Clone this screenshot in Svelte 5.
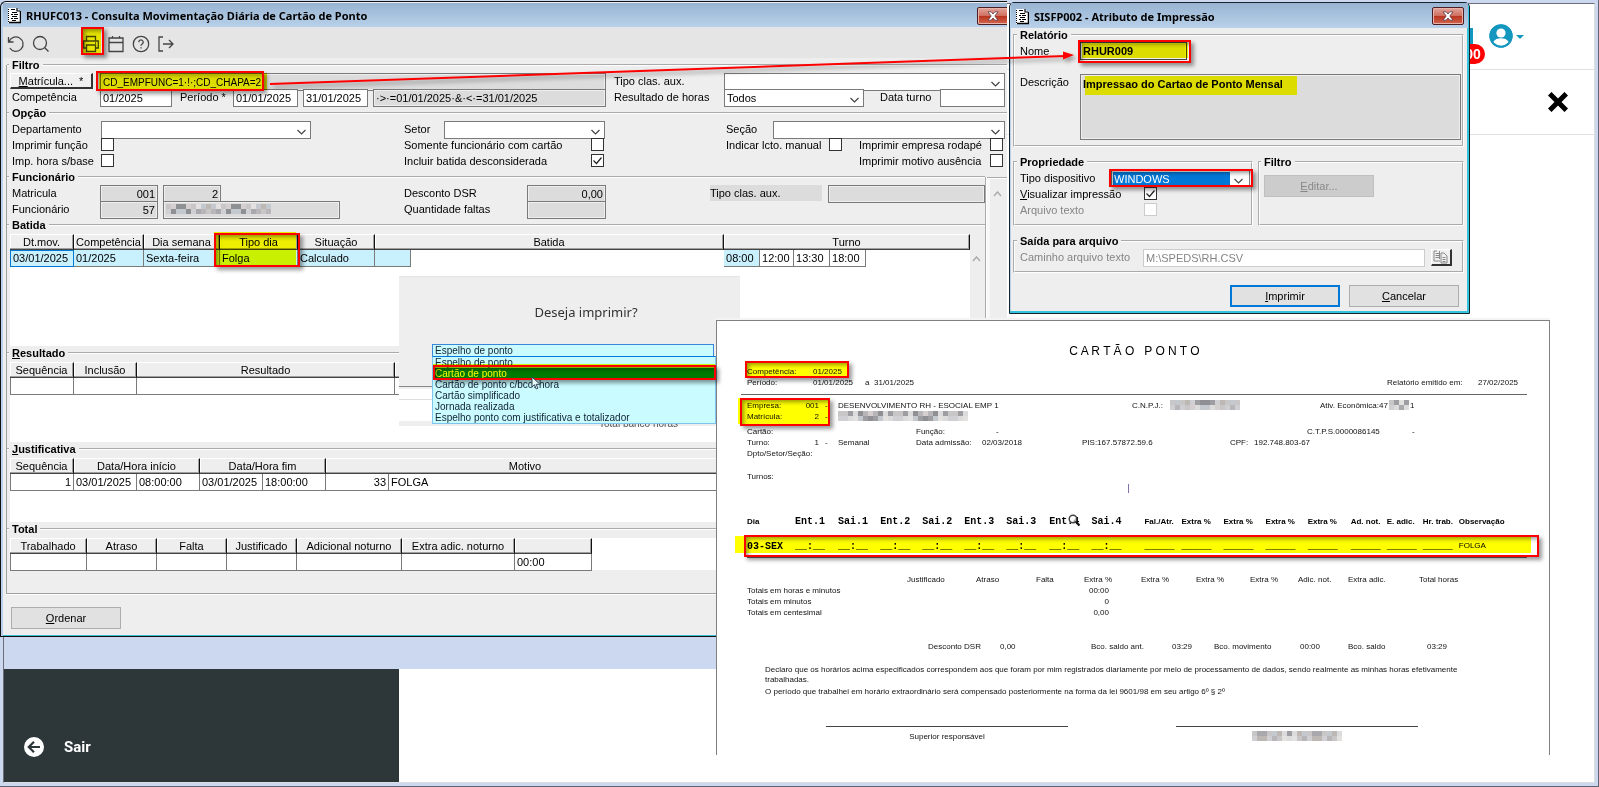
<script>
  const tones = ['#c9c6c8', '#a9a9ad', '#dcdcdc', '#b9b6ba', '#8f9094', '#cfcfd4', '#bdb8b4', '#e4e2e0', '#9d9da2', '#c4c8cf', '#d6cfd0'];
  const punches = ['Ent.1', 'Sai.1', 'Ent.2', 'Sai.2', 'Ent.3', 'Sai.3', 'Ent.4', 'Sai.4'];
  const sums = ['Fal./Atr.', 'Extra %', 'Extra %', 'Extra %', 'Extra %', 'Ad. not.', 'E. adic.', 'Hr. trab.'];
  const reports = ['Espelho de ponto', 'Cartão de ponto', 'Cartão de ponto c/bco. hora', 'Cartão simplificado', 'Jornada realizada', 'Espelho ponto com justificativa e totalizador'];
  const totals = ['Justificado', 'Atraso', 'Falta', 'Extra %', 'Extra %', 'Extra %', 'Extra %', 'Adic. not.', 'Extra adic.', 'Total horas'];
</script>

{#snippet mosaic(cols, rows, size, seed)}
  <svg class="mosaic" width={cols * size} height={rows * size} aria-hidden="true">
    {#each Array(rows) as _, r}
      {#each Array(cols) as _, c}
        <rect x={c * size} y={r * size} width={size} height={size} fill={tones[(c * 7 + r * 5 + c * c * seed) % tones.length]} />
      {/each}
    {/each}
  </svg>
{/snippet}

{#snippet docIcon()}
  <svg class="doc" width="14" height="17" viewBox="0 0 14 17" aria-hidden="true">
    <path d="M1 1h9l3 3v12H1z" fill="#fff" />
    <path d="M2 15.500h11.500V4" fill="none" stroke="#000" stroke-width="1.500" />
    <path d="M1.500 2v13" stroke="#000" stroke-dasharray="1 1" />
    <path d="M4 2.500h4M5 5.500h5M4 7.500h2M7 7.500h4M5 9.500h5M4 11.500h2M7 11.500h4M5 13.500h4M10 1v3h3" fill="none" stroke="#000" stroke-width="1.200" />
  </svg>
{/snippet}

{#snippet closeIcon()}
  <svg width="12" height="10" viewBox="0 0 12 10" aria-hidden="true">
    <path d="M1 .8h3.200L6 3 7.800.8H11L7.800 5 11 9.200H7.800L6 7 4.200 9.200H1L4.200 5z" fill="#fff" stroke="#5b3a42" stroke-width=".8" />
  </svg>
{/snippet}

{#snippet up()}
  <svg width="9" height="6" viewBox="0 0 9 6" aria-hidden="true"><path d="M1 5l3.500-4L8 5" fill="none" stroke="#aaa" stroke-width="1.400" /></svg>
{/snippet}

<main class="desktop">
  <div class="page">
    <header class="top">
      <span class="bell"></span>
      <span class="badge">00</span>
      <svg class="user" width="24" height="24" viewBox="0 0 24 24" aria-hidden="true">
        <circle cx="12" cy="12" r="11.500" fill="#1497bf" />
        <circle cx="12" cy="9" r="4.600" fill="#fff" />
        <path d="M3.800 18.500c2-3.400 5-4.300 8.200-4.300s6.200.9 8.200 4.300A11 11 0 0 1 12 22a11 11 0 0 1-8.200-3.500z" fill="#fff" />
        <circle cx="12" cy="12" r="10.700" fill="none" stroke="#1497bf" stroke-width="2" />
      </svg>
      <svg class="caret" width="8" height="4" viewBox="0 0 8 4" aria-hidden="true"><path d="M0 0h8L4 4z" fill="#1497bf" /></svg>
    </header>
    <div class="subbar">
      <svg width="20" height="20" viewBox="0 0 20 20" aria-hidden="true"><path d="M3.500 3.500l13 13M16.500 3.500l-13 13" stroke="#000" stroke-width="5" stroke-linecap="square" /></svg>
    </div>
  </div>
  <div class="band"></div>
  <aside class="side">
    <a href="#sair" class="exit">
      <svg width="20" height="20" viewBox="0 0 20 20" aria-hidden="true">
        <circle cx="10" cy="10" r="10" fill="#fff" />
        <path d="M16 10H5M10 4.800L4.800 10l5.200 5.200" fill="none" stroke="#2d373a" stroke-width="2.200" />
      </svg>
      <span>Sair</span>
    </a>
  </aside>

  <section class="win main-win">
    <div class="titlebar">
      {@render docIcon()}
      <h1>RHUFC013 - Consulta Movimentação Diária de Cartão de Ponto</h1>
      <button class="close clipped" aria-label="Fechar">{@render closeIcon()}</button>
    </div>
    <div class="toolbar">
      <button aria-label="Desfazer"><svg width="18" height="18" viewBox="0 0 18 18"><path d="M1.500 2v5h5M2 7a7.200 7.200 0 1 1 .8 6" /></svg></button>
      <button aria-label="Pesquisar"><svg width="18" height="18" viewBox="0 0 18 18"><circle cx="8" cy="8" r="6.500" /><path d="M12.800 12.800L16.500 16.500" /></svg></button>
      <button class="printer" aria-label="Imprimir"><svg width="18" height="18" viewBox="0 0 18 18"><path d="M4.500 6V1.500h9V6M4.500 13H1.700V6h14.600v7h-2.800M4.500 10h9v6.500h-9zM13 8h1" /></svg></button>
      <button aria-label="Calendário"><svg width="18" height="18" viewBox="0 0 18 18"><path d="M2 3h14v13.500H2zM2 7.500h14M5.500 3V1M12.500 3V1" /></svg></button>
      <button aria-label="Ajuda"><svg width="18" height="18" viewBox="0 0 18 18"><circle cx="9" cy="9" r="7.700" /><path d="M6.800 7.200a2.200 2.200 0 1 1 3.400 1.800c-.8.500-1.200.9-1.200 1.700M9 12.200v1.200" /></svg></button>
      <button aria-label="Sair da tela"><svg width="18" height="18" viewBox="0 0 18 18"><path d="M6 2H2v14h4M6 9h10M12 5l4 4-4 4" /></svg></button>
    </div>

    <div class="body">
      <fieldset class="first">
        <legend>Filtro</legend>
        <div class="row f1">
          <button class="raised"><u>M</u>atrícula... &nbsp;*</button>
          <input class="ro w506 expr" aria-label="Matrícula" value="CD_EMPFUNC=1·!·;CD_CHAPA=2" readonly />
          <label for="tca">Tipo clas. aux.</label>
          <select id="tca"><option></option></select>
        </div>
        <div class="row f2">
          <label for="comp">Competência</label>
          <input id="comp" class="w72" value="01/2025" />
          <label for="per">Período *</label>
          <input id="per" class="w65" value="01/01/2025" />
          <input class="w65" aria-label="Período final" value="31/01/2025" />
          <input class="ro w233" aria-label="Expressão do período" value="·>·=01/01/2025·&·<·=31/01/2025" readonly />
          <label for="res">Resultado de horas</label>
          <select id="res" class="w140"><option>Todos</option></select>
          <label for="turno">Data turno</label>
          <input id="turno" />
        </div>
      </fieldset>

      <fieldset>
        <legend>Opção</legend>
        <div class="row o1">
          <label for="dep">Departamento</label>
          <select id="dep" class="w210"><option></option></select>
          <label for="setor">Setor</label>
          <select id="setor" class="w161"><option></option></select>
          <label for="secao">Seção</label>
          <select id="secao"><option></option></select>
        </div>
        <div class="row o2">
          <label for="c1">Imprimir função</label><input id="c1" type="checkbox" />
          <label for="c2">Somente funcionário com cartão</label><input id="c2" type="checkbox" />
          <label for="c3">Indicar lcto. manual</label><input id="c3" type="checkbox" />
          <label for="c4">Imprimir empresa rodapé</label><input id="c4" type="checkbox" />
        </div>
        <div class="row o3">
          <label for="c5">Imp. hora s/base</label><input id="c5" type="checkbox" />
          <label for="c6">Incluir batida desconsiderada</label><input id="c6" type="checkbox" checked />
          <label for="c7">Imprimir motivo ausência</label><input id="c7" type="checkbox" />
        </div>
      </fieldset>

      <div class="split">
        <div class="panel">
          <fieldset class="first">
            <legend>Funcionário</legend>
            <div class="row p1">
              <label for="mat">Matricula</label>
              <input id="mat" class="ro num w58" value="001" readonly />
              <input class="ro num w58" aria-label="Chapa" value="2" readonly />
              <label for="dsr">Desconto DSR</label>
              <input id="dsr" class="ro num w79" value="0,00" readonly />
              <label for="tca2" class="shade">Tipo clas. aux.</label>
              <input id="tca2" class="ro" readonly />
            </div>
            <div class="row p1">
              <label for="func">Funcionário</label>
              <input id="func" class="ro num w58" value="57" readonly />
              <div class="ro masked">{@render mosaic(21, 2, 5, 3)}</div>
              <label for="faltas">Quantidade faltas</label>
              <input id="faltas" class="ro num w79" readonly />
            </div>
          </fieldset>

          <fieldset>
            <legend>Batida</legend>
            <div class="sheet h112 withscroll">
              <table class="t-batida">
                <colgroup><col /><col /><col /><col /><col /><col /><col /><col /><col /><col /><col /><col /></colgroup>
                <thead><tr><th>Dt.mov.</th><th>Competência</th><th>Dia semana</th><th>Tipo dia</th><th>Situação</th><th colspan="2">Batida</th><th colspan="5">Turno</th></tr></thead>
                <tbody><tr>
                  <td class="sky cur">03/01/2025</td><td class="sky">01/2025</td><td class="sky">Sexta-feira</td><td class="sky">Folga</td><td class="sky">Calculado</td><td class="sky"></td><td class="none"></td>
                  <td class="sky">08:00</td><td>12:00</td><td>13:30</td><td>18:00</td><td class="none"></td>
                </tr></tbody>
              </table>
              <div class="inner-scroll">{@render up()}</div>
            </div>
          </fieldset>

          <fieldset>
            <legend><u>R</u>esultado</legend>
            <div class="sheet h80">
              <table class="t-res">
                <colgroup><col /><col /><col /><col /></colgroup>
                <thead><tr><th>Sequência</th><th>Inclusão</th><th>Resultado</th><th></th></tr></thead>
                <tbody><tr><td></td><td></td><td></td><td></td></tr></tbody>
              </table>
            </div>
          </fieldset>

          <fieldset>
            <legend><u>J</u>ustificativa</legend>
            <div class="sheet h64">
              <table class="t-just">
                <colgroup><col /><col /><col /><col /><col /><col /><col /></colgroup>
                <thead><tr><th>Sequência</th><th colspan="2">Data/Hora início</th><th colspan="2">Data/Hora fim</th><th colspan="2">Motivo</th></tr></thead>
                <tbody><tr><td class="right">1</td><td>03/01/2025</td><td>08:00:00</td><td>03/01/2025</td><td>18:00:00</td><td class="right">33</td><td>FOLGA</td></tr></tbody>
              </table>
            </div>
          </fieldset>

          <fieldset class="last">
            <legend>Total</legend>
            <div class="sheet h32">
              <table class="t-total">
                <colgroup><col /><col /><col /><col /><col /><col /><col /></colgroup>
                <thead><tr><th>Trabalhado</th><th>Atraso</th><th>Falta</th><th>Justificado</th><th>Adicional noturno</th><th>Extra adic. noturno</th><th></th></tr></thead>
                <tbody><tr><td></td><td></td><td></td><td></td><td></td><td></td><td>00:00</td></tr></tbody>
              </table>
            </div>
          </fieldset>
        </div>
        <div class="outer-scroll">{@render up()}</div>
      </div>
    </div>
    <div class="foot"><button class="btn"><u>O</u>rdenar</button></div>
  </section>

  <section class="ask">
    <h2>Deseja imprimir?</h2>
    <div class="under"><span>Total banco horas</span></div>
    <div class="combo">
      <select aria-label="Deseja imprimir?"><option>Espelho de ponto</option></select>
      <ul role="listbox" aria-label="Relatórios">
        {#each reports as r, i}
          <li role="option" aria-selected={i === 1} class:on={i === 1}>{r}</li>
        {/each}
      </ul>
    </div>
  </section>

  <section class="win print-win">
    <div class="titlebar">
      {@render docIcon()}
      <h1>SISFP002 - Atributo de Impressão</h1>
      <button class="close" aria-label="Fechar">{@render closeIcon()}</button>
    </div>
    <div class="pbody">
      <fieldset class="box">
        <legend>Relatório</legend>
        <div class="row n1"><label for="nome">Nome</label><input id="nome" class="ro strong name" value="RHUR009" readonly /></div>
        <div class="row n2"><label for="desc">Descrição</label><textarea id="desc" class="ro strong" readonly>Impressao do Cartao de Ponto Mensal</textarea></div>
      </fieldset>
      <div class="pair">
        <fieldset class="box prop">
          <legend>Propriedade</legend>
          <div class="row d1"><label for="disp">Tipo dispositivo</label><select id="disp" class="device"><option>WINDOWS</option></select></div>
          <div class="row d2"><label for="vis"><u>V</u>isualizar impressão</label><input id="vis" type="checkbox" checked /></div>
          <div class="row d2 off"><label for="arq">Arquivo texto</label><input id="arq" type="checkbox" disabled /></div>
        </fieldset>
        <fieldset class="box filt">
          <legend>Filtro</legend>
          <button class="btn dim" disabled><u>E</u>ditar...</button>
        </fieldset>
      </div>
      <fieldset class="box saida">
        <legend>Saída para arquivo</legend>
        <div class="row s1 off">
          <label for="cam">Caminho arquivo texto</label>
          <input id="cam" value="M:\SPEDS\RH.CSV" disabled />
          <button class="copy" aria-label="Procurar arquivo">
            <svg width="16" height="14" viewBox="0 0 16 14"><path d="M1 1h3M1 1v10h6M2.500 3.500h4M2.500 5.500h4M2.500 7.500h4M8 3v10h6V6l-3-3zM9.500 7.500h3M9.500 9.500h3M9.500 11.500h3M6.500 1v8" fill="none" stroke="#888" /></svg>
          </button>
        </div>
      </fieldset>
      <div class="actions"><button class="btn primary"><u>I</u>mprimir</button><button class="btn"><u>C</u>ancelar</button></div>
    </div>
  </section>

  <article class="report">
    <h2>C A R T Ã O &nbsp; P O N T O</h2>
    <div class="ln l1"><span>Competência:</span><span>01/2025</span></div>
    <div class="ln l2"><span>Período:</span><span>01/01/2025</span><span>a</span><span>31/01/2025</span><span>Relatório emitido em:</span><span>27/02/2025</span></div>
    <hr class="wide" />
    <div class="ln l3"><span>Empresa:</span><span class="right">001</span><span class="dash">-</span><span>DESENVOLVIMENTO RH - ESOCIAL EMP 1</span><span>C.N.P.J.:</span>{@render mosaic(14, 2, 5, 2)}<span class="econ">Ativ. Econômica:47{@render mosaic(4, 2, 5, 1)}1</span></div>
    <div class="ln l3"><span>Matrícula:</span><span class="right">2</span><span class="dash">-</span>{@render mosaic(26, 2, 5, 4)}</div>
    <div class="ln l5"><span>Cartão:</span><span>Função:</span><span>-</span><span>C.T.P.S.0000086145</span><span>-</span></div>
    <div class="ln l6"><span>Turno:</span><span class="right">1</span><span class="dash">-</span><span>Semanal</span><span>Data admissão:</span><span>02/03/2018</span><span>PIS:167.57872.59.6</span><span>CPF:</span><span>192.748.803-67</span></div>
    <div class="ln">Dpto/Setor/Seção:</div>
    <div class="ln turnos">Turnos:</div>
    <table class="days">
      <colgroup>{#each Array(18) as _}<col />{/each}</colgroup>
      <thead><tr><th>Dia</th>{#each punches as p}<th class="mono">{p}</th>{/each}{#each sums as s}<th>{s}</th>{/each}<th>Observação</th></tr></thead>
      <tbody><tr><td class="mono b">03-SEX</td>{#each punches as _}<td class="mono b">__:__</td>{/each}{#each sums as _}<td class="mono b">_____</td>{/each}<td class="obs">FOLGA</td></tr></tbody>
    </table>
    <table class="sumtable">
      <colgroup>{#each Array(11) as _}<col />{/each}</colgroup>
      <thead><tr><th></th>{#each totals as t}<th>{t}</th>{/each}</tr></thead>
      <tbody>
        <tr><td colspan="4">Totais em horas e minutos</td><td class="right">00:00</td></tr>
        <tr><td colspan="4">Totais em minutos</td><td class="right">0</td></tr>
        <tr><td colspan="4">Totais em centesimal</td><td class="right">0,00</td></tr>
      </tbody>
    </table>
    <div class="ln l9"><span>Desconto DSR</span><span>0,00</span><span>Bco. saldo ant.</span><span>03:29</span><span>Bco. movimento</span><span>00:00</span><span>Bco. saldo</span><span>03:29</span></div>
    <div class="decl">
      <p>Declaro que os horários acima especificados correspondem aos que foram por mim registrados diariamente por meio de processamento de dados, sendo realmente as minhas horas efetivamente<br />trabalhadas.</p>
      <p>O período que trabalhei em horário extraordinário será compensado posteriormente na forma da lei 9601/98 em seu artigo 6º § 2º</p>
    </div>
    <div class="sign"><div>Superior responsável</div><div>{@render mosaic(18, 2, 5, 5)}</div></div>
  </article>

  <i class="hl hl-print"></i><i class="hl hl-mat"></i><i class="hl hl-tipo"></i><i class="hl hl-nome"></i><i class="hl hl-desc"></i>
  <i class="hl hl-opt"></i><i class="hl hl-comp"></i><i class="hl hl-emp"></i><i class="hl hl-day"></i>
  <i class="fr fr-print"></i><i class="fr fr-mat"></i><i class="fr fr-tipo"></i><i class="fr fr-nome"></i><i class="fr fr-disp"></i>
  <i class="fr fr-opt"></i><i class="fr fr-comp"></i><i class="fr fr-emp"></i><i class="fr fr-day"></i>

  <svg class="arrow" width="812" height="48" viewBox="0 0 812 48" aria-hidden="true">
    <path d="M2 36L798 8" stroke="#f00" stroke-width="2" />
    <path d="M806 7L795 3.500v8z" fill="#f00" />
  </svg>
  <svg class="pointer" width="10" height="14" viewBox="0 0 10 14" aria-hidden="true"><path d="M1 1v10l2.500-2.300L5.200 13l1.700-.8L5.200 8.300H9z" fill="#e8ffff" stroke="#345" /></svg>
  <svg class="lens" width="13" height="13" viewBox="0 0 13 13" aria-hidden="true"><circle cx="5" cy="5" r="3.800" fill="#fff" fill-opacity=".6" stroke="#444" stroke-width="1.500" /><path d="M8 8l3.500 3.500" stroke="#111" stroke-width="2.200" /></svg>
  <i class="ibeam"></i>
</main>

<style>
  :global(body) { margin: 0; }
  .desktop { position: relative; min-height: 100vh; overflow: hidden; box-sizing: border-box; background: #ccd8f0; font: 11px/16px "Liberation Sans", Arial, sans-serif; color: #000; border: solid #5f6570; border-width: 0 1px 1px 0; }
  .desktop * { box-sizing: border-box; }
  h1, h2, p, ul { margin: 0; padding: 0; }
  input, select, textarea, button { font: inherit; color: inherit; margin: 0; border-radius: 0; }

  .page { position: absolute; inset: 3px 3px 3px 3px; background: #fff; border: 1px solid #6b7078; border-right-color: #ddd; border-bottom-color: #ddd; }
  .top { height: 66px; border-bottom: 1px solid #e0e0e0; display: flex; justify-content: flex-end; align-items: center; padding-right: 70px; }
  .bell { width: 20px; height: 18px; margin-right: -12px; border: 3px solid #1497bf; border-width: 0 3px 3px 0; }
  .badge { width: 24px; height: 20px; margin: 34px 4px 0 0; border-radius: 10px; background: #f00; color: #fff; font: bold 14px/20px "Liberation Sans", sans-serif; text-align: center; }
  .user { margin: 0 3px 2px 0; }
  .subbar { height: 65px; border-bottom: 1px solid #e0e0e0; display: flex; justify-content: flex-end; align-items: center; padding-right: 26px; }
  .band { position: absolute; left: 4px; top: 637px; width: 712px; height: 32px; background: #ccd8f0; }
  .side { position: absolute; left: 4px; top: 669px; bottom: 4px; width: 395px; background: #2d373a; display: flex; align-items: flex-end; padding: 0 20px 24px; }
  .exit { display: flex; align-items: center; gap: 20px; color: #fff; text-decoration: none; font: bold 15px/22px "Roboto", sans-serif; }

  .win { position: absolute; background: #eee; display: flex; flex-direction: column; }
  .main-win { left: 0; top: 1px; width: 1007px; border: solid #111; border-width: 1px 0 1px 1px; border-top-left-radius: 6px; box-shadow: inset 2px 0 #b9d1ea, inset 0 -1px #3bbdd2; padding: 1px 0 3px 2px; overflow: hidden; }
  .titlebar { height: 24px; display: flex; align-items: center; gap: 5px; padding: 1px 0 0 4px; background: linear-gradient(#98b4d2, #b9d1ea); }
  .titlebar h1 { flex: 1; font: bold 11px/20px "Noto Sans", sans-serif; white-space: nowrap; padding-top: 1px; }
  .close { width: 32px; height: 18px; margin-right: 4px; padding: 0; display: grid; place-items: center; border: 1px solid #4b1e24; border-radius: 2px; background: linear-gradient(#e2a59b, #cf6f60 48%, #b8321e 50%, #d2664f); box-shadow: inset 0 0 0 1px #eab3a9; }
  .close.clipped { margin-right: -2px; }
  .toolbar { height: 31px; display: flex; align-items: center; gap: 7px; padding: 2px 0 0 4px; background: #e5e5e5; }
  .toolbar button { width: 18px; height: 18px; padding: 0; border: 0; background: none; }
  .toolbar svg { display: block; fill: none; stroke: #444; stroke-width: 1.300; }
  .toolbar .printer { margin-left: 25px; }
  .body { margin: 7px 0 0 3px; border-left: 1px solid #a0a0a0; border-bottom: 1px solid #a0a0a0; box-shadow: 0 1px #fff; }
  fieldset { margin: 0; padding: 1px 2px 1px 5px; min-width: 0; border: 0; border-top: 2px groove #fff; }
  .first { margin-top: -7px; }
  legend { margin-left: -3px; padding: 0 3px; font-weight: bold; line-height: 14px; height: 14px; }
  .row { display: grid; height: 16px; align-items: start; }
  .row label { line-height: 16px; white-space: nowrap; }
  .f1 { grid-template-columns: 88px 514px 110px 1fr; }
  .f2 { grid-template-columns: 88px 80px 53px 70px 70px 241px 110px 156px 60px 1fr; }
  .o1 { grid-template-columns: 89px 303px 40px 282px 47px 1fr; }
  .o2 { grid-template-columns: 89px 303px 187px 135px 103px 30px 131px 1fr; }
  .o3 { grid-template-columns: 89px 303px 187px 268px 131px 1fr; }
  .p1 { grid-template-columns: 88px 63px 241px 123px 183px 118px 1fr; }
  .row input, .row select, .masked { width: 100%; height: 18px; padding: 0 2px; border: 1px solid #7a7a7a; background-color: #fff; outline: 0; }
  .row .ro { background-color: #dcdcdc; box-shadow: inset 0 0 0 1px #eee; }
  .row .expr { font-size: 10px; }
  .row .w506 { width: 506px; } .row .w233 { width: 233px; } .row .w210 { width: 210px; } .row .w161 { width: 161px; } .row .w140 { width: 140px; }
  .row .w79 { width: 79px; } .row .w72 { width: 72px; } .row .w65 { width: 65px; } .row .w58 { width: 58px; }
  .row .masked { width: 177px; padding: 2px; }
  .num { text-align: right; }
  .shade { width: 112px; background: #dcdcdc; }
  select { appearance: none; background: #fff url("data:image/svg+xml,%3Csvg xmlns='http://www.w3.org/2000/svg' width='9' height='6'%3E%3Cpath d='M.5 1l4 4 4-4' fill='none' stroke='%23444' stroke-width='1.200'/%3E%3C/svg%3E") no-repeat right 4px top 7px; }
  .row input[type="checkbox"] { appearance: none; width: 13px; height: 13px; padding: 0; border: 1px solid #333; margin-top: 1px; }
  .row input[type="checkbox"]:checked { background: #fff url("data:image/svg+xml,%3Csvg xmlns='http://www.w3.org/2000/svg' width='11' height='11'%3E%3Cpath d='M1.500 5.500l3 3 5-6' fill='none' stroke='%23222' stroke-width='1.200'/%3E%3C/svg%3E"); }
  .raised { width: 83px; height: 16px; margin-left: -2px; padding: 0; line-height: 14px; background: #f0f0f0; border: solid; border-width: 1px 2px 2px 1px; border-color: #fff #333 #333 #fff; }
  .split { display: flex; }
  .panel { flex: 1; margin-top: 7px; border-right: 2px groove #fff; }
  .panel fieldset { padding-right: 0; }
  .outer-scroll { width: 20px; margin-top: 7px; border-top: 2px groove #fff; text-align: center; box-shadow: inset 3px 0 #f8f8f8; padding-top: 6px; }
  .sheet { margin: 1px 0 -1px -2px; background: #fff; display: flex; }
  .h112 { height: 112px; } .h80 { height: 80px; } .h64 { height: 64px; } .h32 { height: 32px; }
  .last { padding-bottom: 24px; }
  .inner-scroll { flex: 1; background: #eee; padding: 22px 0 0 2px; }
  .inner-scroll svg { display: block; }
  .sheet table { table-layout: fixed; border-collapse: separate; border-spacing: 0; align-self: flex-start; }
  .sheet th { height: 16px; padding: 0; line-height: 13px; font-weight: normal; background: #eee; white-space: nowrap; border: solid; border-width: 1px 1px 1px 0; border-color: #fff #111 #444 #fff; box-shadow: inset -1px -1px #a0a0a0, inset 1px 0 #fff; }
  .sheet td { height: 17px; padding: 0 2px; line-height: 15px; border: solid #7a7a7a; border-width: 0 1px 1px 0; white-space: nowrap; overflow: hidden; }
  .sheet td:first-child { border-left-width: 1px; }
  .sheet td.none { border: 0; }
  .sheet td.sky { background: #c9f0fd; }
  .sheet td.cur { border: 1px solid #0078d7; }
  .right { text-align: right; }
  .t-batida { width: 960px; }
  .t-batida col:nth-child(1) { width: 64px; } .t-batida col:nth-child(2) { width: 70px; } .t-batida col:nth-child(3) { width: 76px; } .t-batida col:nth-child(4) { width: 78px; }
  .t-batida col:nth-child(5) { width: 77px; } .t-batida col:nth-child(6) { width: 36px; } .t-batida col:nth-child(7) { width: 313px; } .t-batida col:nth-child(8) { width: 36px; }
  .t-batida col:nth-child(9) { width: 34px; } .t-batida col:nth-child(10), .t-batida col:nth-child(11) { width: 36px; }
  .t-res { width: 700px; }
  .t-res col:nth-child(1) { width: 64px; } .t-res col:nth-child(2) { width: 63px; } .t-res col:nth-child(3) { width: 258px; }
  .t-just { width: 715px; }
  .t-just col:nth-child(1) { width: 64px; } .t-just col:nth-child(n+2):nth-child(-n+6) { width: 63px; }
  .t-total { width: 582px; }
  .t-total col:nth-child(1) { width: 77px; } .t-total col:nth-child(2), .t-total col:nth-child(4) { width: 70px; } .t-total col:nth-child(3) { width: 70px; } .t-total col:nth-child(5) { width: 105px; } .t-total col:nth-child(6) { width: 113px; }
  .foot { padding: 13px 0 4px 8px; }
  .btn { width: 110px; height: 22px; padding: 0; background: #e1e1e1; border: 1px solid #adadad; }
  .mosaic { display: block; }

  .ask { position: absolute; left: 399px; top: 276px; width: 341px; height: 150px; background: linear-gradient(#eee 109px, #888 109px 110px, #eee 110px 112px, #fff 112px 122px, #ddd 122px 123px, #fff 123px 144px, #eee 144px 149px, #bbb 149px); border-top: 1px solid #e4e4e4; }
  .ask h2 { padding: 25px 0 22px 33px; width: 341px; text-align: center; font: 13px/20px "Noto Sans", sans-serif; color: #333; }
  .combo { margin-left: 33px; width: 284px; font-size: 10px; color: #123; position: relative; }
  .combo select { display: block; width: 282px; height: 13px; padding: 0 2px; border: 1px solid #3a86d8; background: #c9fbff; line-height: 11px; }
  .combo ul { list-style: none; margin-top: -1px; background: #c9fbff; border: 1px solid #7cc5ee; border-top-color: #0078d7; }
  .combo li { height: 11px; line-height: 11px; padding-left: 2px; white-space: nowrap; }
  .combo .on { background: #007a30; color: #fff; }
  .under { position: absolute; left: 200px; bottom: -4px; height: 6px; overflow: hidden; font-size: 10px; color: #555; }
  .under span { display: block; margin-top: -6px; line-height: 12px; }

  .print-win { left: 1009px; top: 2px; width: 461px; border: 1px solid #15232b; border-radius: 5px 5px 0 0; padding: 0 3px 2px 2px; box-shadow: inset -2px -2px #36c3de, inset 1px 0 #b9d1ea; }
  .print-win .titlebar { height: 25px; margin: 0 -2px 0 -1px; }
  .pbody { padding: 0 2px 4px 1px; display: flex; flex-direction: column; gap: 8px; }
  .box { border: 2px groove #fff; padding: 1px 1px 0 5px; flex: 1; }
  .n1 { grid-template-columns: 60px 1fr; } .n2 { grid-template-columns: 60px 1fr; height: 86px; padding-top: 15px; }
  .row .name { width: 107px; margin-top: -1px; border-color: #444; }
  .strong { font-weight: bold; }
  textarea { display: block; width: 100%; height: 66px; padding: 1px 2px; border: 1px solid #7a7a7a; resize: none; }
  .pair { display: flex; gap: 5px; }
  .prop { flex: 0 0 240px; padding-bottom: 6px; }
  .d1 { grid-template-columns: 91px 1fr; } .d2 { grid-template-columns: 124px 1fr; }
  .row .device { height: 17px; width: 139px; color: #fff; background-color: #fff; background-image: url("data:image/svg+xml,%3Csvg xmlns='http://www.w3.org/2000/svg' width='9' height='6'%3E%3Cpath d='M.5 1l4 4 4-4' fill='none' stroke='%23444' stroke-width='1.200'/%3E%3C/svg%3E"), linear-gradient(#0078d7, #0078d7); background-repeat: no-repeat; background-size: auto, 117px 13px; background-position: right 6px top 7px, left 1px top 1px; }
  .off { color: #858585; }
  .off input:disabled { border-color: #ccc; color: #858585; }
  .filt .btn { margin-top: 5px; display: block; }
  .filt { padding-left: 4px; }
  .dim { background: #ccc; border-color: #bfbfbf; color: #888; }
  .saida { padding-bottom: 5px; }
  .s1 { grid-template-columns: 123px 282px 1fr; height: 17px; }
  .copy { width: 21px; height: 17px; margin-left: 6px; padding: 0; display: grid; place-items: center; background: #f0f0f0; border: solid; border-width: 1px 2px 2px 1px; border-color: #fff #333 #333 #fff; }
  .actions { display: flex; justify-content: flex-end; gap: 9px; padding: 4px 5px 0 0; }
  .primary { border: 2px solid #0078d7; }

  .report { position: absolute; left: 716px; top: 320px; width: 834px; height: 435px; padding: 22px 22px 0 30px; background: #fff; border: 1px solid #808080; border-bottom: 0; font-size: 8px; line-height: 11px; color: #111; box-shadow: 0 -2px #f4f4f4; }
  .report h2 { margin-left: -5px; text-align: center; font: 12px/16px "Liberation Sans", sans-serif; color: #000; margin-bottom: 7px; }
  .ln { display: grid; height: 11px; white-space: nowrap; }
  .l1 { grid-template-columns: 66px 1fr; }
  .l2 { grid-template-columns: 66px 52px 9px 513px 91px 1fr; }
  .l3 { grid-template-columns: 50px 22px 19px 294px 38px 150px 1fr; }
  .l5 { grid-template-columns: 169px 80px 311px 105px 1fr; margin-top: 4px; }
  .l6 { grid-template-columns: 50px 22px 19px 78px 66px 100px 148px 24px 1fr; }
  .l9 { grid-template-columns: 72px 91px 81px 42px 86px 48px 79px 1fr; margin: 23px 0 13px 181px; }
  .dash { padding-left: 6px; }
  .econ { display: flex; gap: 1px; }
  .turnos { margin: 12px 0 34px; }
  .wide { height: 1px; margin: 6px 0 5px -6px; border: 0; background: #666; }
  .report table { table-layout: fixed; border-collapse: collapse; width: 100%; }
  .report th, .report td { padding: 0; text-align: left; white-space: nowrap; }
  .mono { font-family: "Liberation Mono", monospace; font-size: 10px; }
  .b { font-weight: bold; }
  .days thead tr { height: 19px; } .days th { vertical-align: top; color: #000; border-bottom: 1px solid #666; line-height: 12px; }
  .days tbody tr { height: 22px; } .days td { border-bottom: 1px solid #666; color: #000; }
  .days td.obs { vertical-align: top; padding-top: 4px; }
  .days col { width: 42px; }
  .days col:nth-child(1) { width: 48px; }
  .days col:nth-child(2), .days col:nth-child(7) { width: 43px; }
  .days col:nth-child(9) { width: 53px; } .days col:nth-child(10) { width: 37px; }
  .days col:nth-child(14) { width: 43px; }
  .days col:nth-child(15), .days col:nth-child(16), .days col:nth-child(17) { width: 36px; }
  .days col:nth-child(18) { width: 68px; }
  .sumtable { margin-top: 16px; }
  .sumtable th { font-weight: normal; } .sumtable tr { height: 11px; }
  .sumtable td.right { text-align: right; padding-right: 32px; }
  .sumtable col:nth-child(1) { width: 160px; } .sumtable col:nth-child(2) { width: 69px; } .sumtable col:nth-child(3) { width: 60px; } .sumtable col:nth-child(4) { width: 48px; }
  .sumtable col:nth-child(5) { width: 57px; } .sumtable col:nth-child(6) { width: 55px; } .sumtable col:nth-child(7) { width: 54px; } .sumtable col:nth-child(8) { width: 48px; }
  .sumtable col:nth-child(9) { width: 50px; } .sumtable col:nth-child(10) { width: 71px; }
  .decl { margin-left: 18px; line-height: 10px; } .decl p { margin-bottom: 2px; white-space: nowrap; }
  .sign { display: flex; gap: 108px; margin: 29px 0 0 79px; }
  .sign div { width: 242px; padding-top: 4px; border-top: 1px solid #444; display: flex; justify-content: center; }

  .hl, .fr, .arrow, .pointer, .lens, .ibeam { position: absolute; pointer-events: none; }
  .hl { background: #ff0; mix-blend-mode: multiply; }
  .fr { border: 2px solid #f00; box-shadow: 3px 3px 4px rgba(0, 0, 0, .4), inset 3px 3px 4px -1px rgba(0, 0, 0, .4); }
  .fr-print { left: 81px; top: 27px; width: 23px; height: 28px; } .hl-print { left: 82px; top: 28px; width: 19px; height: 26px; }
  .fr-mat { left: 96px; top: 71px; width: 168px; height: 20px; } .hl-mat { left: 99px; top: 73px; width: 168px; height: 17px; }
  .fr-tipo { left: 214px; top: 233px; width: 86px; height: 34px; } .hl-tipo { left: 214px; top: 232px; width: 82px; height: 35px; }
  .fr-nome { left: 1078px; top: 40px; width: 113px; height: 23px; } .hl-nome { left: 1082px; top: 43px; width: 106px; height: 15px; }
  .hl-desc { left: 1085px; top: 76px; width: 212px; height: 19px; }
  .fr-disp { left: 1109px; top: 169px; width: 144px; height: 18px; }
  .fr-opt { left: 433px; top: 365px; width: 283px; height: 15px; } .hl-opt { left: 433px; top: 364px; width: 282px; height: 15px; }
  .fr-comp { left: 745px; top: 361px; width: 104px; height: 17px; } .hl-comp { left: 747px; top: 363px; width: 101px; height: 14px; }
  .fr-emp { left: 740px; top: 398px; width: 90px; height: 28px; } .hl-emp { left: 738px; top: 398px; width: 90px; height: 26px; }
  .fr-day { left: 744px; top: 535px; width: 795px; height: 22px; } .hl-day { left: 735px; top: 536px; width: 796px; height: 17px; }
  .arrow { left: 268px; top: 48px; fill: none; filter: drop-shadow(3px 3px 2px rgba(0, 0, 0, .4)); }
  .pointer { left: 531px; top: 376px; }
  .lens { left: 1068px; top: 514px; }
  .ibeam { left: 1128px; top: 484px; width: 1px; height: 9px; background: #8470a8; }
</style>
